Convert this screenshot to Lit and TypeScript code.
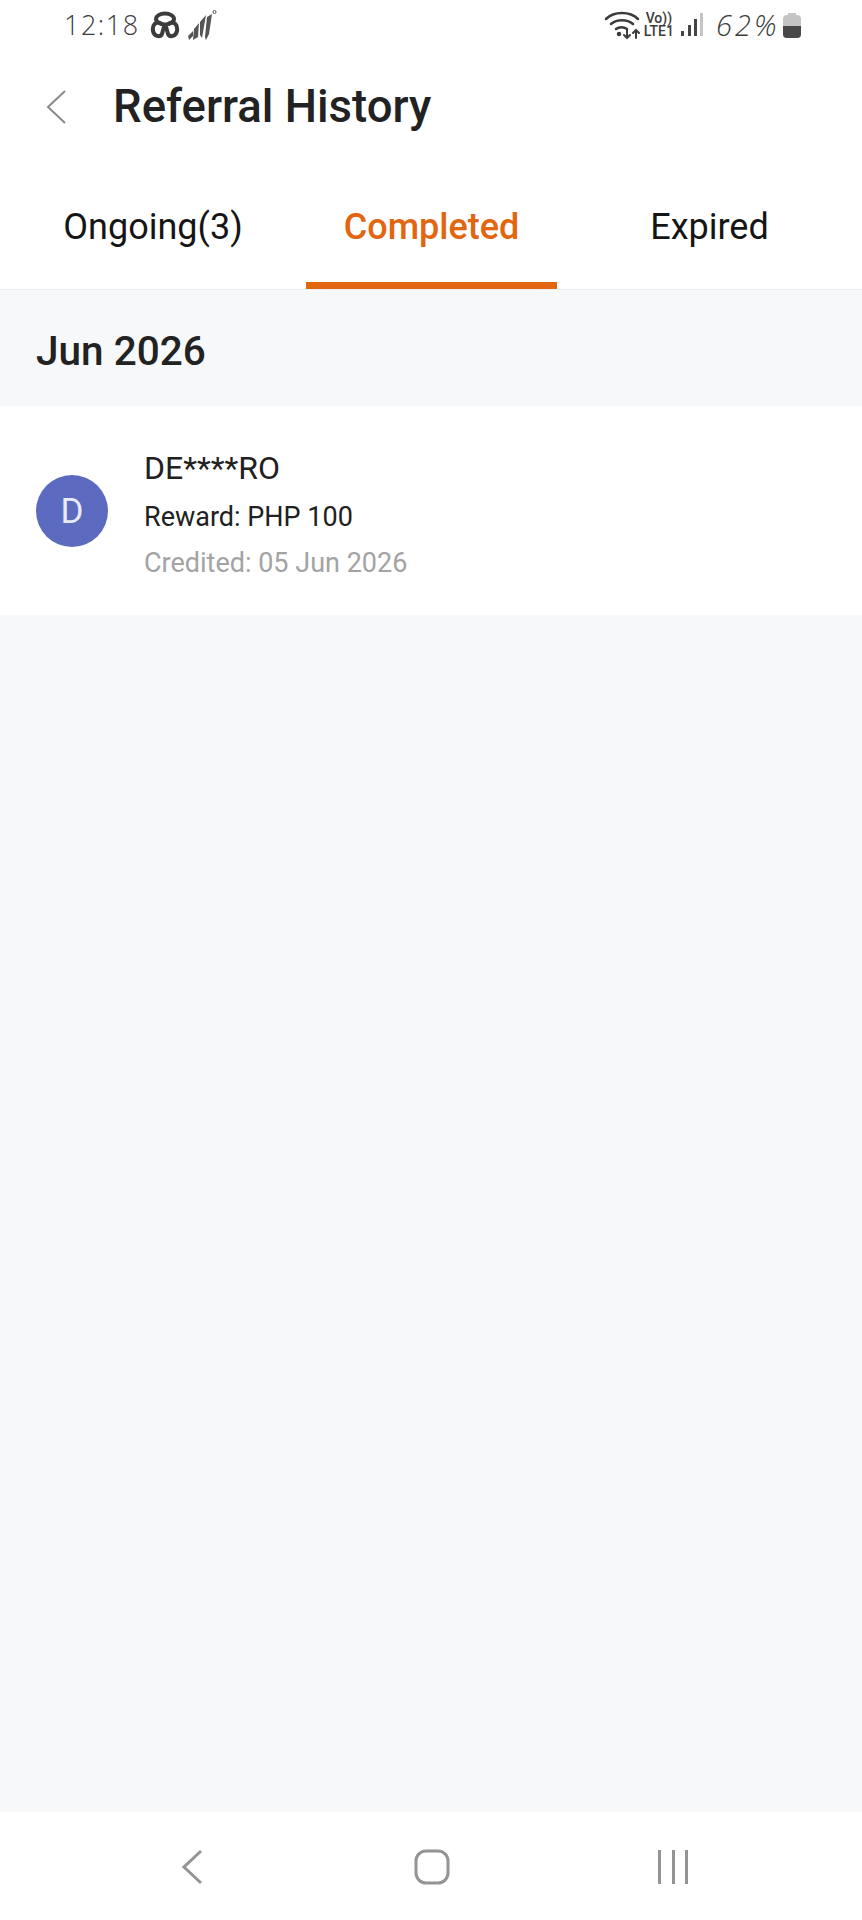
import { LitElement, html, css } from 'lit';
import { customElement, state } from 'lit/decorators.js';
import { classMap } from 'lit/directives/class-map.js';

const TABS = ['Ongoing(3)', 'Completed', 'Expired'];

@customElement('app-root')
export class AppRoot extends LitElement {
  @state() active = 1;

  static styles = css`
    :host {
      display: block;
      font-family: Roboto, "Liberation Sans", sans-serif;
      color: #212121;
    }

    .page {
      width: 862px;
      height: 1920px;
      display: flex;
      flex-direction: column;
      background: #f6f8fa;
    }

    .status {
      height: 50px;
      flex: none;
      display: flex;
      align-items: center;
      justify-content: space-between;
      padding: 0 61px 0 64px;
      background: #fff;
      color: #3c3c3c;
    }

    .status-side {
      display: flex;
      align-items: center;
    }

    .hand {
      font-family: "Open Sans", sans-serif;
      font-weight: 300;
      font-size: 29px;
      line-height: 30px;
    }

    .clock {
      margin-right: 10px;
      font-size: 27px;
      letter-spacing: 1.500px;
    }

    .percent {
      width: 62px;
      margin-left: 13px;
      font-style: italic;
      letter-spacing: 3px;
    }

    .wifi {
      margin-right: 4px;
    }

    .lte {
      display: flex;
      flex-direction: column;
      align-items: center;
      margin-right: 7px;
      font-size: 14px;
      font-weight: 500;
      line-height: 13px;
    }

    .signal {
      margin-left: 7px;
    }

    .battery {
      margin-left: 5px;
    }

    .header {
      height: 108px;
      flex: none;
      display: flex;
      align-items: center;
      gap: 47px;
      padding: 5px 0 0 46px;
      background: #fff;
      box-sizing: border-box;
    }

    .back {
      display: block;
    }

    h1 {
      margin: 0;
      font-size: 45.5px;
      font-weight: 500;
      line-height: 60px;
      color: #222;
    }

    .tabs {
      height: 132px;
      flex: none;
      display: grid;
      grid-template-columns: 306px 251px 305px;
      background: #fff;
      border-bottom: 1px solid #eceef0;
      box-sizing: border-box;
    }

    .tab {
      display: flex;
      justify-content: center;
      padding-top: 45px;
      font-size: 36px;
      line-height: 48px;
      color: #151515;
      box-sizing: border-box;
    }

    .tab.on {
      color: #e2650f;
      font-weight: 500;
      border-bottom: 7px solid #e2650f;
    }

    .month {
      height: 116px;
      flex: none;
      display: flex;
      align-items: center;
      padding: 5px 0 0 36px;
      font-size: 40.5px;
      font-weight: 500;
      color: #222;
      box-sizing: border-box;
    }

    .row {
      height: 209px;
      flex: none;
      display: flex;
      align-items: center;
      gap: 36px;
      padding-left: 36px;
      background: #fff;
    }

    .avatar {
      width: 72px;
      height: 72px;
      flex: none;
      display: flex;
      align-items: center;
      justify-content: center;
      margin-top: 1px;
      border-radius: 50%;
      background: #5c6bc0;
      color: #e8eaf6;
      font-size: 35px;
    }

    .info {
      display: flex;
      flex-direction: column;
      padding-top: 8px;
    }

    .name {
      margin-bottom: 12px;
      font-size: 32px;
      line-height: 38px;
    }

    .reward {
      margin-bottom: 10px;
    }

    .reward,
    .credited {
      font-size: 27px;
      line-height: 36px;
    }

    .credited {
      color: #a3a3a3;
    }

    .spacer {
      flex: 1;
    }

    .nav {
      height: 108px;
      flex: none;
      display: grid;
      grid-template-columns: repeat(3, 1fr);
      padding: 2px 69px 0 72px;
      background: #fff;
      box-sizing: border-box;
    }

    .nav-item {
      display: flex;
      align-items: center;
      justify-content: center;
    }
  `;

  render() {
    return html`
      <div class="page">
        <div class="status">
          <div class="status-side">
            <span class="hand clock">12:18</span>
            <svg width="30" height="28" viewBox="0 0 30 28" fill="none" stroke="#3c3c3c" stroke-width="4">
              <ellipse cx="15" cy="8" rx="9" ry="5.500"/>
              <path d="M12 13C6 9 2 14 3 20c1 5 7 7 9 3 1-3 1-6 3-9"/>
              <path d="M18 13c6-4 10 1 9 7-1 5-7 7-9 3-1-3-1-6-3-9"/>
            </svg>
            <svg class="signal" width="30" height="32" viewBox="0 0 30 32" fill="#555">
              <path d="M1 27l5-5v5l-4 4zM7 20l5-6-1 14-5 3zM13 13l6-7-4 23-2-3zM20 8l5-3-3 20-3 6-1-3z"/>
              <circle cx="27.500" cy="3" r="1.500" fill="none" stroke="#555"/>
            </svg>
          </div>
          <div class="status-side">
            <svg class="wifi" width="36" height="30" viewBox="0 0 36 30" fill="none" stroke="#3c3c3c" stroke-width="2.500" stroke-linecap="round">
              <path d="M2 9c8-8 24-8 32 0M7 14c6-5 16-5 22 0M12 19c3-2.500 8-2.500 11 0"/>
              <circle cx="15" cy="24" r="1" fill="#3c3c3c"/>
              <path d="M23 20v8m-3-3l3 3 3-3M32 28v-8m-3 3l3-3 3 3" stroke-width="2"/>
            </svg>
            <span class="lte"><span>Vo))</span><span>LTE1</span></span>
            <svg width="22" height="26" viewBox="0 0 22 26">
              <rect x="0" y="19" width="3" height="5" fill="#444"/>
              <rect x="7" y="13" width="3" height="11" fill="#444"/>
              <rect x="13" y="7" width="3" height="17" fill="#444"/>
              <rect x="19" y="1" width="3" height="23" fill="#c4c4c4"/>
            </svg>
            <span class="hand percent">62%</span>
            <svg class="battery" width="18" height="26" viewBox="0 0 18 26">
              <path d="M5 1h8v2h1a4 4 0 0 1 4 4v15a4 4 0 0 1-4 4H4a4 4 0 0 1-4-4V7a4 4 0 0 1 4-4h1z" fill="#c4c4c4"/>
              <path d="M0 14h18v8a4 4 0 0 1-4 4H4a4 4 0 0 1-4-4z" fill="#484848"/>
            </svg>
          </div>
        </div>

        <div class="header">
          <svg class="back" width="20" height="36" viewBox="0 0 20 36" fill="none" stroke="#8a8a8a" stroke-width="2">
            <path d="M19 2L2 18l17 16"/>
          </svg>
          <h1>Referral History</h1>
        </div>

        <div class="tabs">
          ${TABS.map(
            (t, i) => html`<div
              class=${classMap({ tab: true, on: i === this.active })}
              @click=${() => (this.active = i)}
            >${t}</div>`
          )}
        </div>

        <div class="month">Jun 2026</div>

        <div class="row">
          <div class="avatar">D</div>
          <div class="info">
            <div class="name">DE****RO</div>
            <div class="reward">Reward: PHP 100</div>
            <div class="credited">Credited: 05 Jun 2026</div>
          </div>
        </div>

        <div class="spacer"></div>

        <div class="nav">
          <div class="nav-item">
            <svg width="22" height="36" viewBox="0 0 22 36" fill="none" stroke="#949494" stroke-width="3">
              <path d="M20 2L3 18l17 16"/>
            </svg>
          </div>
          <div class="nav-item">
            <svg width="36" height="36" viewBox="0 0 36 36" fill="none" stroke="#949494" stroke-width="3">
              <rect x="2" y="2" width="32" height="32" rx="10"/>
            </svg>
          </div>
          <div class="nav-item">
            <svg width="30" height="36" viewBox="0 0 30 36" fill="#949494">
              <rect x="0" y="1" width="3" height="34"/>
              <rect x="14" y="1" width="3" height="34"/>
              <rect x="27" y="1" width="3" height="34"/>
            </svg>
          </div>
        </div>
      </div>
    `;
  }
}
